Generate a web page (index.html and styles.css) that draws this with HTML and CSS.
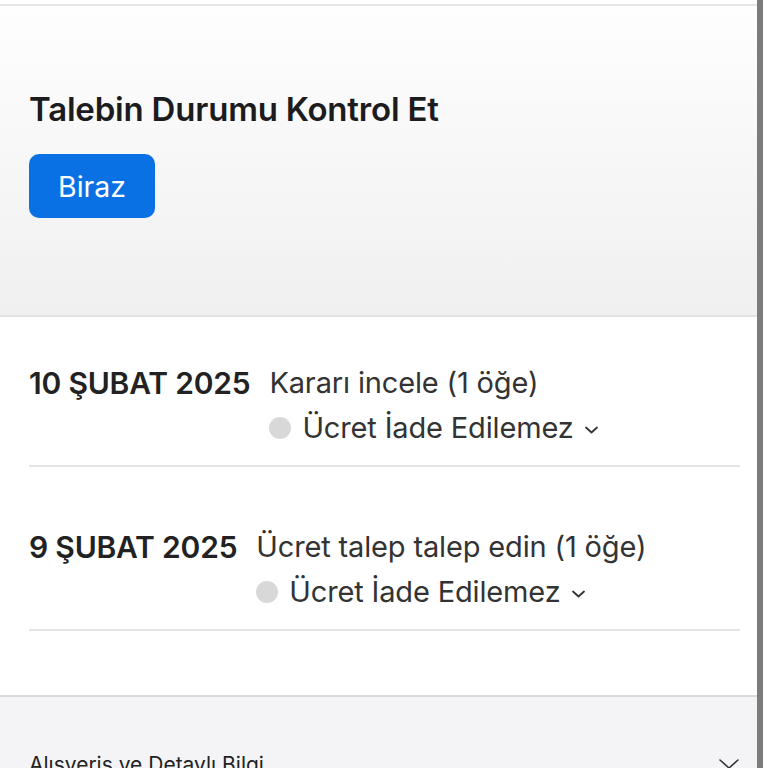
FILE: index.html
```html
<!DOCTYPE html>
<html lang="tr">
<head>
<meta charset="utf-8">
<link rel="stylesheet" href="styles.css">
</head>
<body>
<div class="screen">
  <div class="page">
    <div class="topline"></div>
    <section class="hero">
      <h1 class="title">Talebin Durumu Kontrol Et</h1>
      <button class="btn">Biraz</button>
    </section>
    <section class="list">
      <div class="row">
        <div class="date">10 ŞUBAT 2025</div>
        <div class="info">
          <div class="desc">Kararı incele (1 öğe)</div>
          <div class="status"><span class="dot"></span><span>Ücret İade Edilemez</span><svg class="chev" viewBox="0 0 15 10" width="15" height="10"><path d="M2 2.5 L7.5 7.5 L13 2.5" fill="none" stroke="#333" stroke-width="1.8" stroke-linecap="round" stroke-linejoin="round"/></svg></div>
        </div>
      </div>
      <div class="row">
        <div class="date">9 ŞUBAT 2025</div>
        <div class="info">
          <div class="desc">Ücret talep talep edin (1 öğe)</div>
          <div class="status"><span class="dot"></span><span>Ücret İade Edilemez</span><svg class="chev" viewBox="0 0 15 10" width="15" height="10"><path d="M2 2.5 L7.5 7.5 L13 2.5" fill="none" stroke="#333" stroke-width="1.8" stroke-linecap="round" stroke-linejoin="round"/></svg></div>
        </div>
      </div>
    </section>
    <section class="footer">
      <div class="footrow">
        <span class="foottext">Alışveriş ve Detaylı Bilgi</span>
        <svg class="x" viewBox="0 0 22 20" width="22" height="20"><path d="M2 8 L11 16 L20 8" fill="none" stroke="#333" stroke-width="1.6" stroke-linecap="round"/></svg>
      </div>
    </section>
  </div>
  <div class="scrollbar"></div>
</div>
</body>
</html>
```
FILE: styles.css
```css
html, body {
  margin: 0;
  padding: 0;
  background: #ffffff;
}
body {
  font-family: Inter, "Noto Sans", sans-serif;
  color: #222;
  width: 768px;
  height: 768px;
  overflow: hidden;
}
.screen {
  display: flex;
  height: 768px;
}
.page {
  width: 757px;
  display: flex;
  flex-direction: column;
}
.page > * {
  flex-shrink: 0;
}
.scrollbar {
  width: 6px;
  background: #7c7c7c;
  height: 768px;
}
.topline {
  height: 4px;
  background: #ffffff;
  border-bottom: 2px solid #e6e6e6;
}
.hero {
  height: 311px;
  box-sizing: border-box;
  border-bottom: 2px solid #e2e2e2;
  background: linear-gradient(#fefefe, #f0f0f0);
  padding: 0 29px;
}
.title {
  margin: 0;
  padding-top: 83px;
  font-size: 33px;
  line-height: 40px;
  font-weight: 600;
  color: #1c1c1e;
  letter-spacing: -0.2px;
}
.btn {
  display: block;
  margin-top: 25px;
  width: 126px;
  height: 64px;
  border: none;
  border-radius: 10px;
  background: #0a71e4;
  color: #fff;
  font-family: Inter, "Noto Sans", sans-serif;
  font-size: 28.5px;
  padding: 0;
}
.list {
  padding: 0 17px 64px 29px;
  background: #fff;
  border-bottom: 2px solid #d9d9d9;
  box-shadow: 0 1px 2px rgba(0,0,0,0.06);
}
.row {
  display: flex;
  gap: 19px;
  padding-top: 62px;
  padding-bottom: 19px;
  border-bottom: 2px solid #e4e4e4;
}
.row:first-child {
  padding-top: 48px;
}
.date {
  font-size: 30px;
  line-height: 36px;
  font-weight: 600;
  color: #222;
  letter-spacing: -0.2px;
}
.info {
  display: flex;
  flex-direction: column;
  gap: 9px;
}
.desc {
  font-size: 29px;
  line-height: 36px;
  color: #333;
  letter-spacing: -0.15px;
}
.status {
  display: flex;
  align-items: center;
  font-size: 29px;
  line-height: 36px;
  color: #333;
  letter-spacing: -0.15px;
}
.dot {
  width: 22px;
  height: 22px;
  border-radius: 50%;
  background: #d8d8d8;
  margin-right: 11px;
}
.chev {
  margin-left: 10px;
  margin-top: 4px;
}
.footer {
  flex: 1;
  background: #f4f4f6;
  padding: 0 17px 0 29px;
}
.footrow {
  display: flex;
  justify-content: space-between;
  align-items: flex-start;
  padding-top: 55px;
}
.foottext {
  font-size: 21px;
  line-height: 26px;
  color: #222;
}
.x {
  margin-right: 0;
}
```
